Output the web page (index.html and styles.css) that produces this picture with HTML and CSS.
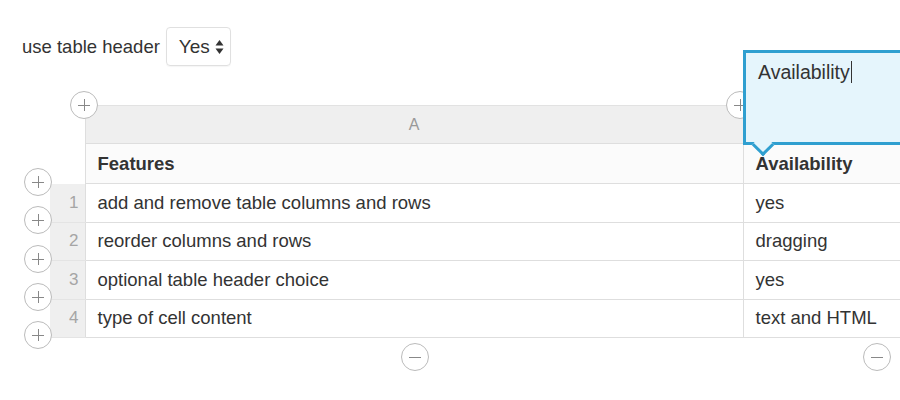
FILE: index.html
```html
<!DOCTYPE html>
<html lang="en">
<head>
    <meta charset="UTF-8">
    <title>Table Editor</title>
    <link rel="stylesheet" href="styles.css">
</head>
<body>

    <div class="toolbar">
        <label for="useHeader">use table header</label>
        <div class="select-box" id="useHeader">
            <span>Yes</span>
            <svg class="arrows" width="9" height="16" viewBox="0 0 9 16">
                <path d="M4.5 1 L8.5 6.5 L0.5 6.5 Z" fill="#333"/>
                <path d="M4.5 15 L8.5 9.5 L0.5 9.5 Z" fill="#333"/>
            </svg>
        </div>
    </div>

    <div class="editor">
        <table class="grid">
            <tr class="col-row">
                <td class="num blank"></td>
                <td class="col-a">A</td>
                <td class="col-b"></td>
            </tr>
            <tr class="head-row">
                <td class="num blank"></td>
                <td>Features</td>
                <td>Availability</td>
            </tr>
            <tr>
                <td class="num">1</td>
                <td>add and remove table columns and rows</td>
                <td>yes</td>
            </tr>
            <tr>
                <td class="num">2</td>
                <td>reorder columns and rows</td>
                <td>dragging</td>
            </tr>
            <tr>
                <td class="num">3</td>
                <td>optional table header choice</td>
                <td>yes</td>
            </tr>
            <tr>
                <td class="num">4</td>
                <td>type of cell content</td>
                <td>text and HTML</td>
            </tr>
        </table>

        <!-- add / remove handles -->
        <span class="handle add" style="left: 20px; top: -14px;"></span>
        <span class="handle add" style="left: 676px; top: -14px;"></span>
        <span class="handle add" style="left: -26px; top: 63px;"></span>
        <span class="handle add" style="left: -26px; top: 101px;"></span>
        <span class="handle add" style="left: -26px; top: 140px;"></span>
        <span class="handle add" style="left: -26px; top: 178px;"></span>
        <span class="handle add" style="left: -26px; top: 216px;"></span>
        <span class="handle remove" style="left: 351px; top: 238px;"></span>
        <span class="handle remove" style="left: 813px; top: 238px;"></span>

        <div class="cell-popup">
            <span>Availability</span><span class="caret"></span>
        </div>
    </div>

</body>
</html>
```

FILE: styles.css
```css
* {
    margin: 0;
    padding: 0;
    box-sizing: border-box;
}

body {
    width: 900px;
    height: 400px;
    overflow: hidden;
    background: #fff;
    color: #333;
    font-family: 'Liberation Sans', Arial, sans-serif;
    font-size: 18.5px;
}

.toolbar {
    display: flex;
    align-items: center;
    gap: 6px;
    padding: 27px 0 0 22px;
    height: 66px;
}

.toolbar label {
    font-size: 18.5px;
    color: #333;
}

.select-box {
    display: flex;
    align-items: center;
    gap: 5px;
    height: 39px;
    padding: 0 6px 0 12px;
    border: 1px solid #e0e0e0;
    border-radius: 4px;
    font-size: 19px;
    box-shadow: 0 1px 1px rgba(0, 0, 0, 0.04);
}

.editor {
    position: relative;
    width: 850px;
    margin: 39px 0 0 50px;
}

.grid {
    border-collapse: collapse;
    table-layout: fixed;
    width: 850px;
}

.grid td {
    height: 38.5px;
    padding: 0 12px;
    border-bottom: 1px solid #dedede;
    border-left: 1px solid #dedede;
    white-space: nowrap;
    overflow: hidden;
}

.grid td:first-child {
    border-left: none;
}

.grid td.num {
    width: 35px;
    padding: 0 6px 0 0;
    text-align: right;
    font-size: 17px;
    color: #a5a5a5;
    background: #efefef;
    border-bottom-color: #e4e4e4;
}

.grid td.num.blank {
    background: #fff;
    border-bottom: none;
}

.col-row td {
    height: 38px;
    border-top: 1px solid #e2e2e2;
}

.col-row td.num {
    border-top: none;
}

.col-row .col-a,
.col-row .col-b {
    background: #efefef;
    color: #999;
    text-align: center;
    font-size: 16px;
}

.grid td:nth-child(2) {
    width: 658px;
}

.head-row td {
    height: 40px;
    font-weight: bold;
    background: #fbfbfb;
}

.head-row td.num {
    background: #fff;
}

.handle {
    position: absolute;
    width: 28px;
    height: 28px;
    border: 1px solid #bbb;
    border-radius: 50%;
    background: #fff;
}

.handle::before,
.handle::after {
    content: '';
    position: absolute;
    left: 7px;
    top: 12.5px;
    width: 12px;
    height: 1.5px;
    background: #888;
}

.handle.add::after {
    left: 12.5px;
    top: 7px;
    width: 1.5px;
    height: 12px;
}

.handle.remove::after {
    display: none;
}

.cell-popup {
    position: absolute;
    left: 693px;
    top: -55px;
    width: 157px;
    height: 95px;
    padding: 8px 12px;
    background: #e5f5fc;
    border: 3px solid #2f9fd0;
    border-right: none;
    font-size: 19.5px;
    color: #333;
}

.cell-popup::after {
    content: '';
    position: absolute;
    left: 9px;
    bottom: -11px;
    width: 13px;
    height: 13px;
    background: #e5f5fc;
    border-right: 3px solid #2f9fd0;
    border-bottom: 3px solid #2f9fd0;
    transform: rotate(45deg);
}

.caret {
    display: inline-block;
    width: 1px;
    height: 22px;
    margin-left: 1px;
    vertical-align: -4px;
    background: #333;
}
```
